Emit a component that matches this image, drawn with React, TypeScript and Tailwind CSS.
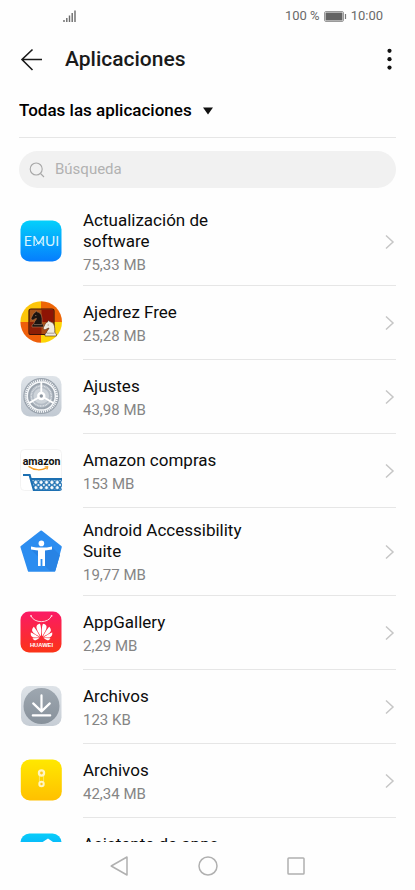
import React from 'react';
import { SiHuawei } from 'react-icons/si';

interface AppItem {
  id: string;
  name: string;
  size?: string;
  icon: React.ReactNode;
}

const EmuiIcon = () => (
  <svg viewBox="0 0 42 42" className="w-[42px] h-[42px]" aria-hidden="true">
    <defs>
      <linearGradient id="emui" x1="0" y1="0" x2="0" y2="1">
        <stop offset="0" stopColor="#04d0fb" />
        <stop offset="1" stopColor="#067dfd" />
      </linearGradient>
    </defs>
    <rect x="0.5" y="0.5" width="41" height="41" rx="9" fill="url(#emui)" />
    <text x="21.5" y="26" textAnchor="middle" fontFamily="Lato, sans-serif" fontSize="14" fill="#d8f4ff">
      EMUI
    </text>
    <path d="M15.5 25.6 L19.8 21 L24 25.6" fill="none" stroke="#d8f4ff" strokeWidth="0.9" />
  </svg>
);

const ChessIcon = () => (
  <svg viewBox="0 0 42 42" className="w-[42px] h-[42px]" aria-hidden="true">
    <defs>
      <clipPath id="chessClip">
        <circle cx="21.2" cy="21" r="20.8" />
      </clipPath>
      <linearGradient id="chessBoard" x1="0" y1="0" x2="1" y2="1">
        <stop offset="0" stopColor="#a8561c" />
        <stop offset="1" stopColor="#b04a10" />
      </linearGradient>
    </defs>
    <g clipPath="url(#chessClip)">
      <rect width="21" height="21" fill="#fdc60a" />
      <rect x="21" width="21" height="21" fill="#ee6606" />
      <rect y="21" width="21" height="21" fill="#ee5f0a" />
      <rect x="21" y="21" width="21" height="21" fill="#fdd506" />
    </g>
    <rect x="9" y="8" width="25" height="25.5" rx="2" fill="url(#chessBoard)" stroke="#3c1206" strokeWidth="1.2" />
    <path d="M21.5 8.6 H33.4 V21 H21.5 Z" fill="#8e1404" />
    <path d="M9.6 21 H21.5 V33 H9.6 Z" fill="#8c1e06" />
    <path
      d="M12 26 V24 L14 22.5 C14 20 16.5 19 16.5 17.4 C14.5 17.6 13.6 19.4 12 19 C10.8 18.4 10.8 17.4 12 15.6 C12.8 13.4 13.6 12 15.4 11.2 L15.8 9.6 L17.4 11 C21.2 11.6 22.6 15.4 22 22.5 L23.4 24 V26 Z"
      fill="#1c130f"
      stroke="#c28a60"
      strokeWidth="0.5"
    />
    <path
      d="M25 35 V33 L26.6 31.6 C26.6 29.6 28.8 28.6 29 27 C27 27.2 25.8 29 24.2 28.6 C22.8 28 23 26.8 24.2 25 C25 23 26 21.6 27.8 20.8 L28.2 19.2 L29.8 20.6 C34 21.4 35.2 25 34.8 31.6 L36.4 33 V35 Z"
      fill="#f0ece0"
      stroke="#4b2a18"
      strokeWidth="0.6"
    />
    <path d="M15 14.6 h1.4 M27.6 24 h1.4 M26.6 32.2 h8 M14 23.6 h8" stroke="#8f7a6a" strokeWidth="0.7" />
  </svg>
);

const SettingsIcon = () => (
  <svg viewBox="0 0 42 42" className="w-[42px] h-[42px]" aria-hidden="true">
    <defs>
      <linearGradient id="settingsBg" x1="0" y1="0" x2="0" y2="1">
        <stop offset="0" stopColor="#dfe4e9" />
        <stop offset="1" stopColor="#c1c9d2" />
      </linearGradient>
    </defs>
    <rect x="1" y="1" width="40.5" height="40.5" rx="8.5" fill="url(#settingsBg)" />
    <circle cx="21.3" cy="21" r="18" fill="#9ba4ae" />
    <circle cx="21.3" cy="21" r="15.6" fill="none" stroke="#f6f8fa" strokeWidth="2.4" strokeDasharray="1.1 0.86" />
    <circle cx="21.3" cy="21" r="14" fill="none" stroke="#f6f8fa" strokeWidth="1.4" />
    <circle cx="21.3" cy="21" r="11.4" fill="#b3bbc4" />
    <circle cx="21.3" cy="21" r="10" fill="none" stroke="#e3e7eb" strokeWidth="1.3" strokeDasharray="0.9 0.7" />
    <circle cx="21.3" cy="21" r="7.8" fill="#cdd3d9" />
    <path d="M21.3 21 V7 M21.3 21 L9.4 27.9 M21.3 21 L33.2 27.9" stroke="#fff" strokeWidth="1.8" />
    <circle cx="21.3" cy="21" r="4.2" fill="#fff" />
    <circle cx="21.3" cy="21" r="1.7" fill="#8d96a0" />
  </svg>
);

const AmazonIcon = () => (
  <svg viewBox="0 0 42 42" className="w-[42px] h-[42px]" aria-hidden="true">
    <defs>
      <clipPath id="amazonClip">
        <rect x="0.5" y="0.5" width="41.5" height="41.5" rx="3" />
      </clipPath>
      <pattern id="basket" x="13" y="30.6" width="5.4" height="5.4" patternUnits="userSpaceOnUse">
        <rect width="5.4" height="5.4" fill="#1d70b2" />
        <path d="M2.7 0.5 L4.7 2.7 L2.7 4.9 L0.7 2.7 Z" fill="#fff" />
        <path d="M0 -1.4 L1.3 0 L0 1.4 Z M5.4 -1.4 V1.4 L4.1 0 Z M0 4 L1.3 5.4 L0 6.8 Z M5.4 4 V6.8 L4.1 5.4 Z" fill="#fff" />
      </pattern>
    </defs>
    <rect x="0.5" y="0.5" width="41" height="41" rx="4" fill="#fff" stroke="#f3f3f3" />
    <text
      x="21.5"
      y="16"
      textAnchor="middle"
      fontFamily="Roboto, sans-serif"
      fontWeight="700"
      fontSize="10.6"
      fill="#111"
    >
      amazon
    </text>
    <path d="M9 17.6 C14.5 21.6 21.5 21.4 26.6 18.8" fill="none" stroke="#f39a1e" strokeWidth="1.4" strokeLinecap="round" />
    <path d="M24.6 17.9 L28 17.6 L27 20.6" fill="none" stroke="#f39a1e" strokeWidth="1" />
    <g clipPath="url(#amazonClip)">
      <path d="M11.5 29.5 H42 V42 H14 Z" fill="url(#basket)" />
      <path d="M11 30 H42" stroke="#1d70b2" strokeWidth="1.8" />
      <path d="M3 26 H9.6 L14 41.5 H42" fill="none" stroke="#1d70b2" strokeWidth="2.2" />
    </g>
  </svg>
);

const AccessibilityIcon = () => (
  <svg viewBox="0 0 42 42" className="w-[42px] h-[42px]" aria-hidden="true">
    <path
      d="M21.2 1.8 L40.6 17 L34.2 40.6 H9 L1.6 17 Z"
      fill="#2c8df0"
      stroke="#2c8df0"
      strokeWidth="2.4"
      strokeLinejoin="round"
    />
    <path d="M32 17 L40 25 L35.4 40.5 L30 41 L25 36 V20 Z M11 19.6 L18 26.6 V20 Z" fill="#2883e4" />
    <circle cx="21.4" cy="13.4" r="2.8" fill="#fff" />
    <path d="M11 16.4 C17.5 18 25.5 18 32 16.4 V19.4 L25 20.4 V36 H22.4 V29 H20.6 V36 H18 V20.4 L11 19.4 Z" fill="#fff" />
  </svg>
);

const GalleryIcon = () => (
  <svg viewBox="0 0 42 42" className="w-[42px] h-[42px]" aria-hidden="true">
    <defs>
      <linearGradient id="gallery" x1="0" y1="0" x2="0" y2="1">
        <stop offset="0" stopColor="#fb1a66" />
        <stop offset="1" stopColor="#fb3417" />
      </linearGradient>
    </defs>
    <rect x="0.5" y="0.5" width="41" height="41" rx="8.5" fill="url(#gallery)" />
    <path d="M11 4.8 C14 12.6 28.6 12.6 31.6 4.8" fill="none" stroke="#ffd5de" strokeWidth="1" />
    <circle cx="11" cy="4.8" r="0.9" fill="#ffd5de" />
    <circle cx="31.6" cy="4.8" r="0.9" fill="#ffd5de" />
    <SiHuawei x="10.5" y="10" size={22} color="#fff" />
    <text x="21.5" y="36.4" textAnchor="middle" fontFamily="Liberation Sans, sans-serif" fontWeight="700" fontSize="5.8" fill="#fff">
      HUAWEI
    </text>
  </svg>
);

const DownloadsIcon = () => (
  <svg viewBox="0 0 42 42" className="w-[42px] h-[42px]" aria-hidden="true">
    <defs>
      <linearGradient id="downloadsBg" x1="0" y1="0" x2="0" y2="1">
        <stop offset="0" stopColor="#dee3e8" />
        <stop offset="1" stopColor="#c6cdd5" />
      </linearGradient>
      <linearGradient id="downloadsDisc" x1="0" y1="0" x2="0" y2="1">
        <stop offset="0" stopColor="#9ea7b0" />
        <stop offset="1" stopColor="#87919b" />
      </linearGradient>
    </defs>
    <rect x="1" y="1" width="40.5" height="40" rx="8.5" fill="url(#downloadsBg)" />
    <circle cx="21.5" cy="21" r="18" fill="url(#downloadsDisc)" />
    <path
      d="M21.5 10.4 V25.6 M13.2 18.4 L21.5 26.4 L29.8 18.4 M12.8 30.4 H30.2"
      fill="none"
      stroke="#fff"
      strokeWidth="2.2"
      strokeLinecap="round"
      strokeLinejoin="round"
    />
  </svg>
);

const FilesIcon = () => (
  <svg viewBox="0 0 42 42" className="w-[42px] h-[42px]" aria-hidden="true">
    <defs>
      <linearGradient id="files" x1="0" y1="0" x2="0" y2="1">
        <stop offset="0" stopColor="#ffe800" />
        <stop offset="1" stopColor="#ffc000" />
      </linearGradient>
    </defs>
    <rect x="0.8" y="0.5" width="41" height="41" rx="9" fill="url(#files)" />
    <path d="M19.4 15 V25 M23.6 15 V25" stroke="#fff2a8" strokeWidth="0.6" />
    <circle cx="21.5" cy="14" r="3.7" fill="#fff6c2" />
    <circle cx="21.5" cy="14" r="1.4" fill="#ffc91a" />
    <circle cx="21.5" cy="25" r="3.2" fill="#fff6c2" />
    <circle cx="21.5" cy="25" r="1.2" fill="#ffc91a" />
  </svg>
);

const AssistantIcon = () => (
  <svg viewBox="0 0 42 42" className="w-[42px] h-[42px]" aria-hidden="true">
    <defs>
      <linearGradient id="assistant" x1="0" y1="0" x2="0" y2="1">
        <stop offset="0" stopColor="#08cdf9" />
        <stop offset="1" stopColor="#067dfd" />
      </linearGradient>
    </defs>
    <rect x="0.5" y="0.5" width="41" height="41" rx="9" fill="url(#assistant)" />
    <path d="M28 5.5 L33 9 L30 30 L12 34 L15 14 Z" fill="#fff" />
  </svg>
);

const apps: AppItem[] = [
  { id: 'update', name: 'Actualización de software', size: '75,33 MB', icon: <EmuiIcon /> },
  { id: 'chess', name: 'Ajedrez Free', size: '25,28 MB', icon: <ChessIcon /> },
  { id: 'settings', name: 'Ajustes', size: '43,98 MB', icon: <SettingsIcon /> },
  { id: 'amazon', name: 'Amazon compras', size: '153 MB', icon: <AmazonIcon /> },
  { id: 'accessibility', name: 'Android Accessibility Suite', size: '19,77 MB', icon: <AccessibilityIcon /> },
  { id: 'gallery', name: 'AppGallery', size: '2,29 MB', icon: <GalleryIcon /> },
  { id: 'downloads', name: 'Archivos', size: '123 KB', icon: <DownloadsIcon /> },
  { id: 'files', name: 'Archivos', size: '42,34 MB', icon: <FilesIcon /> },
  { id: 'assistant', name: 'Asistente de apps', icon: <AssistantIcon /> },
];

const StatusBar = () => (
  <div className="flex h-8 shrink-0 items-center justify-between pl-[63px] pr-8 text-[13px] text-[#6a6a6a]">
    <svg viewBox="0 0 13 12" className="h-3 w-[13px]" aria-hidden="true">
      <path d="M1 10 V12 M3.8 8 V12 M6.5 5.5 V12 M9.2 3 V12 M12 0.5 V12" stroke="#6a6a6a" strokeWidth="1.4" />
    </svg>
    <div className="flex items-center gap-1">
      <span>100 %</span>
      <svg viewBox="0 0 23 11" className="h-[11px] w-[23px]" aria-hidden="true">
        <rect x="0.5" y="0.5" width="19" height="10" rx="1.5" fill="#fff" stroke="#9a9a9a" />
        <rect x="1.5" y="1.5" width="17" height="8" rx="0.5" fill="#636363" />
        <path d="M21.5 3 V8" stroke="#777" strokeWidth="1.2" />
      </svg>
      <span>10:00</span>
    </div>
  </div>
);

const AppRow = ({ app }: { app: AppItem }) => (
  <li>
    <button type="button" className="flex min-h-[74px] w-full gap-5 text-left">
      <span className="flex w-11 shrink-0 items-center justify-center pb-0.5">{app.icon}</span>
      <span className="flex min-w-0 flex-1 items-center justify-between border-b border-[#e6e6e6]">
        <span className="flex min-h-[66px] max-w-[180px] flex-col justify-center gap-[3px] pt-3 pb-[9px]">
          <span className="text-[17px] leading-[21px] text-[#0c0c0c]">{app.name}</span>
          <span className="min-h-[21px] text-[15px] leading-[21px] text-[#858585]">{app.size}</span>
        </span>
        <svg viewBox="0 0 12 16" className="h-4 w-3 shrink-0" fill="none" aria-hidden="true">
          <path d="M2 1.5 L9 8 L2 14.5" stroke="#c6c6c6" strokeWidth="1.5" />
        </svg>
      </span>
    </button>
  </li>
);

export default function App() {
  return (
    <div className="flex h-screen flex-col bg-[#fefefe] font-[Roboto,sans-serif]">
      <StatusBar />

      <header className="flex h-14 shrink-0 items-center gap-[21px] pl-5 pr-3.5">
        <button type="button" aria-label="Atrás">
          <svg viewBox="0 0 24 24" className="h-6 w-6" fill="none" stroke="#1a1a1a" strokeWidth="1.6" aria-hidden="true">
            <path d="M22 11.5 H2 M12.5 1.5 L2 11.5 L12.5 22" />
          </svg>
        </button>
        <h1 className="flex-1 text-[21px] font-medium text-[#1a1a1a]">Aplicaciones</h1>
        <button type="button" aria-label="Más opciones">
          <svg viewBox="0 0 24 24" className="h-6 w-6" fill="#111" aria-hidden="true">
            <circle cx="12.5" cy="2.8" r="2.1" />
            <circle cx="12.5" cy="11.2" r="2.1" />
            <circle cx="12.5" cy="19.6" r="2.1" />
          </svg>
        </button>
      </header>

      <div className="flex min-h-0 flex-1 flex-col px-[19px]">
        <div className="flex h-[50px] shrink-0 items-center gap-2.5 border-b border-[#e6e6e6] pb-1">
          <select
            aria-label="Filtro de aplicaciones"
            className="field-sizing-content appearance-none bg-transparent text-[17px] font-medium text-black"
          >
            <option>Todas las aplicaciones</option>
          </select>
          <svg viewBox="0 0 12 8" className="h-2 w-3" aria-hidden="true">
            <path d="M1 0.5 H11 L6 7.5 Z" fill="#111" />
          </svg>
        </div>

        <label className="mt-[13px] flex h-[37px] shrink-0 items-center gap-2.5 rounded-full bg-[#f1f1f1] px-2.5">
          <svg viewBox="0 0 16 16" className="h-4 w-4" fill="none" stroke="#a8a8a8" strokeWidth="1.1" aria-hidden="true">
            <circle cx="7.2" cy="7" r="6" />
            <path d="M11.5 11.5 L15 15" />
          </svg>
          <input
            type="text"
            aria-label="Búsqueda"
            placeholder="Búsqueda"
            className="min-w-0 flex-1 bg-transparent text-[15px] text-[#1a1a1a] outline-none placeholder:text-[#b2b2b2]"
          />
        </label>

        <ul className="mt-2.5 min-h-0 flex-1 overflow-hidden">
          {apps.map((app) => (
            <AppRow key={app.id} app={app} />
          ))}
        </ul>
      </div>

      <nav className="flex h-12 shrink-0 items-center justify-center gap-16">
        <button type="button" aria-label="Volver">
          <svg viewBox="0 0 24 24" className="h-6 w-6" fill="none" stroke="#b0b0b0" strokeWidth="1.5" strokeLinejoin="round" aria-hidden="true">
            <path d="M3.2 12 L19 3 V21 Z" />
          </svg>
        </button>
        <button type="button" aria-label="Inicio">
          <svg viewBox="0 0 24 24" className="h-6 w-6" fill="none" stroke="#b0b0b0" strokeWidth="1.5" aria-hidden="true">
            <circle cx="12" cy="12" r="9" />
          </svg>
        </button>
        <button type="button" aria-label="Recientes">
          <svg viewBox="0 0 24 24" className="h-6 w-6" fill="none" stroke="#b0b0b0" strokeWidth="1.5" aria-hidden="true">
            <rect x="4" y="4" width="16" height="16" rx="0.8" />
          </svg>
        </button>
      </nav>
    </div>
  );
}
